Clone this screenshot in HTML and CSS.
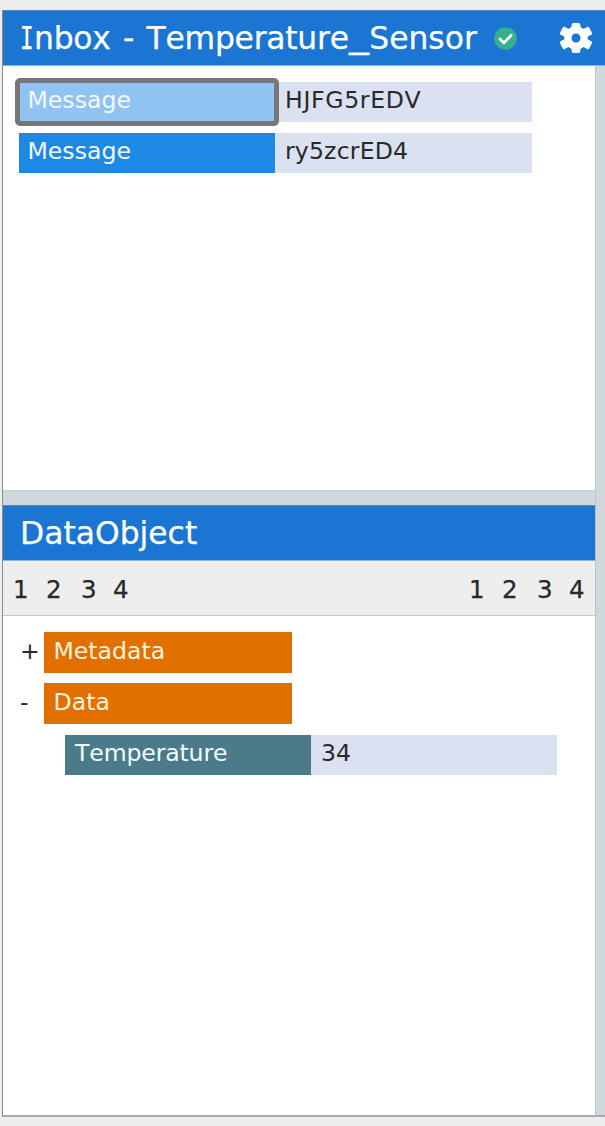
FILE: index.html
```html
<!DOCTYPE html>
<html lang="en">
<head>
<meta charset="utf-8">
<title>Inbox - Temperature_Sensor</title>
<link rel="stylesheet" href="styles.css">
</head>
<body>
<div class="window">
  <header class="bar bar-top">
    <h1 class="title"><span class="cap-i"><span class="narrow">I</span></span><span class="tight">nbox</span><span class="dash">-</span><span class="tight">Temperature</span><span class="underscore"><span class="line">_</span></span><span class="sensor">Sensor</span></h1>
    <svg class="check" viewBox="0 0 24 24"><circle cx="12" cy="12" r="11.8" fill="#34b08e"/><path d="M6.2 12.4l4.2 4.2 7.5-7.9" fill="none" stroke="#fff" stroke-width="2.9" stroke-linecap="round" stroke-linejoin="round"/></svg>
    <svg class="gear" viewBox="0 0 34 32"><g fill="#fff"><circle cx="17" cy="16" r="11.7"/><rect x="12.6" y="1" width="8.8" height="30" rx="2"/><rect x="12.6" y="-.6" width="8.8" height="33.2" rx="1.6" transform="rotate(62 17 16)"/><rect x="12.6" y="-.6" width="8.8" height="33.2" rx="1.6" transform="rotate(118 17 16)"/></g><circle cx="17" cy="16" r="4.5" fill="#1a76d2"/></svg>
  </header>
  <div class="content">
    <main class="panels">
      <section class="inbox">
        <div class="message"><div class="key selected">Message</div><div class="value wide">HJFG5rEDV</div></div>
        <div class="message"><div class="key">Message</div><div class="value code">ry5zcrED4</div></div>
      </section>
      <section class="object">
        <header class="bar"><h2 class="title">DataObject</h2></header>
        <nav class="levels">
          <div class="digits"><span>1</span><span>2</span><span>3</span><span>4</span></div>
          <div class="digits"><span>1</span><span>2</span><span>3</span><span>4</span></div>
        </nav>
        <div class="tree">
          <div class="node"><span class="toggle">+</span><div class="group">Metadata</div></div>
          <div class="node"><span class="toggle">-</span><div class="group">Data</div></div>
          <div class="leaf"><div class="name">Temperature</div><div class="value">34</div></div>
        </div>
      </section>
    </main>
  </div>
</div>
</body>
</html>
```

FILE: styles.css
```css
* { box-sizing: border-box; }
body {
  margin: 0;
  height: 1126px;
  padding: 10px 0 9px 2px;
  overflow: hidden;
  background: #eeeeee;
  font: 23.6px/36px "DejaVu Sans", Verdana, sans-serif;
  font-kerning: none;
  color: #292929;
}
.window {
  height: 1107px;
  display: flex;
  flex-direction: column;
  border-left: 1px solid #8c8c8c;
  border-bottom: 2px solid #aaaaaa;
}
.bar {
  display: flex;
  align-items: center;
  height: 56px;
  padding-left: 17px;
  background: #1a76d2;
  border-top: 1px solid #5784ad;
  border-bottom: 1px solid #88b3de;
}
.title {
  display: flex;
  margin: 0;
  font-size: 31.4px;
  line-height: 54px;
  font-weight: 400;
  color: #fff;
  white-space: nowrap;
  -webkit-text-stroke: .25px #fff;
}
.cap-i { width: 14px; font-family: "DejaVu Sans Mono", monospace; }
.narrow { display: block; width: 18.9px; transform: scaleX(.72); transform-origin: left; }
.tight { letter-spacing: -.25px; }
.dash { width: 36px; text-align: center; }
.underscore { width: 20.5px; }
.line { display: block; width: 16px; transform: translateY(-2px) scaleX(1.27); transform-origin: left; }
.check { width: 23px; height: 23px; margin-left: 17px; }
.gear { width: 34px; height: 32px; margin-left: 42px; }
.content { flex: 1; background: #cfd8dd; }
.panels {
  width: 593px;
  height: 100%;
  display: flex;
  flex-direction: column;
  gap: 14px;
  border-right: 1px solid #b9c3c5;
}
.inbox {
  height: 425px;
  padding: 16px 0 0 16px;
  display: flex;
  flex-direction: column;
  gap: 11px;
  background: #fff;
  border-bottom: 1px solid #c3cdd0;
}
.message, .leaf { display: flex; height: 40px; }
.key { width: 256px; padding-left: 8.5px; background: #1e88e5; color: #f2f9ff; }
.selected { background: #90c3f1; outline: 5px solid #777; outline-offset: -1px; border-radius: 1px; position: relative; color: #f3f9ff; }
.value { width: 257px; padding-left: 10px; background: #dae2f2; }
.wide { letter-spacing: .65px; }
.code { letter-spacing: .15px; }
.object { flex: 1; background: #fff; }
.levels {
  display: flex;
  justify-content: space-between;
  height: 55px;
  padding: 0 6px 0 10px;
  background: #eeeeee;
  border-bottom: 1px solid #c8c8c8;
  font-size: 24.5px;
  line-height: 57px;
  -webkit-text-stroke: .25px #222;
}
.digits { display: grid; grid-template-columns: 33px 35px 32px 20px; }
.tree { padding: 16px 0 0 17px; display: flex; flex-direction: column; gap: 10px; line-height: 38px; }
.node { display: flex; height: 41px; }
.toggle { width: 24px; }
.group { width: 248px; padding-left: 9.5px; background: #e17000; color: #fff3df; }
.leaf { margin: 1px 0 0 45px; line-height: 37px; }
.name { width: 246px; padding-left: 10px; background: #4b7b8b; color: #f2fafa; letter-spacing: -.15px; }
.leaf .value { width: 246px; }
```
